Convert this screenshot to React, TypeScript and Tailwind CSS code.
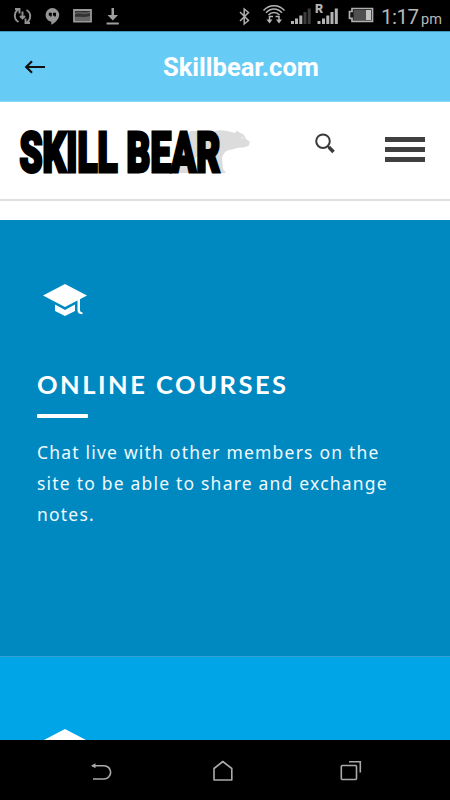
function StatusBar() {
  return (
    <div className="flex h-[31px] w-full shrink-0 bg-black font-['Roboto',sans-serif] text-[#b4b4b4]">
      <svg className="h-[31px] w-[32px]" viewBox="0 0 32 31" fill="none" stroke="#929292" strokeWidth="1.900">
        <path d="M19.500 9A7.200 7.200 0 0 0 18.500 22M25.500 23A7.200 7.200 0 0 0 26.500 10" />
        <path d="M15 9h4.500v4.500M30 23h-4.500v-4.500M22.500 11.500v7M20 16l2.500 2.500 2.500-2.500" />
      </svg>
      <svg className="h-[31px] w-[32px]" viewBox="32 0 32 31">
        <path d="M52.300 8a6.900 6.900 0 0 0-1 13.700v3c4-2 7.500-5.500 7.900-9.500A7 7 0 0 0 52.300 8z" fill="#969696" />
        <path d="M48.800 12.700h3v3l-1.300 1.800v-1.800h-1.700zM53 12.700h3v3l-1.300 1.800v-1.800H53z" fill="#000" />
      </svg>
      <svg className="h-[31px] w-[34px]" viewBox="64 0 34 31">
        <path d="M74 10h17v11.500H74z" fill="#333" stroke="#999" strokeWidth="1.800" />
        <path d="M75 13.500c5-2 7 1 15-1" stroke="#777" fill="none" />
        <path d="M75 17c4-1 7 1 15-1v4.500H75z" fill="#666" />
      </svg>
      <svg className="h-[31px] w-[32px]" viewBox="98 0 32 31" fill="#a0a0a0">
        <path d="M111.500 8h2.500v7h4l-5.200 5.500-5.300-5.500h4zM106.500 22.500h12.300v2h-12.300z" />
      </svg>
      <div className="flex-1" />
      <svg className="h-[31px] w-[24px]" viewBox="232 0 24 31" fill="none" stroke="#b0b0b0" strokeWidth="1.500">
        <path d="M240 12l8.500 8.500-4.300 3.500V9l4.300 3.500-8.500 8.500" />
      </svg>
      <svg className="h-[31px] w-[31px]" viewBox="256 0 31 31" fill="none" stroke="#b4b4b4" strokeWidth="1.500">
        <path d="M263.500 10.500c5.500-6.500 15.500-6.500 21 0M266 12.800c4.500-5 11.500-5 16 0M268.500 15c3-3.300 8-3.300 11 0" />
        <path d="M273 16.500h-3.500v4M275.500 16.500h3.500v4" />
        <path d="M266.500 19.500h6l-3 4zM276 19.500h6l-3 4z" fill="#b4b4b4" stroke="none" />
      </svg>
      <svg className="h-[31px] w-[26px]" viewBox="287 0 26 31">
        <path d="M291 21h3v3h-3zM295 18.500h3V24h-3zM299.300 15.500h3V24h-3z" fill="#b4b4b4" />
        <path d="M303.500 12h3v12h-3zM307.700 8.500h3V24h-3z" fill="#3c3c3c" />
      </svg>
      <svg className="h-[31px] w-[29px]" viewBox="313 0 29 31" fill="#b4b4b4">
        <text x="315" y="13" fontFamily="Roboto" fontSize="12.500" fontWeight="900">R</text>
        <path d="M317.500 21h3v3h-3zM322 18.500h3V24h-3zM326.300 15.500h3V24h-3zM330.500 12h3v12h-3zM334.800 8.500h3V24h-3z" />
      </svg>
      <svg className="h-[31px] w-[38px]" viewBox="342 0 38 31">
        <path d="M352 8.500h20.500v12.800H352v-3h-2.500v-6.800h2.500z" fill="#111" stroke="#b0b0b0" strokeWidth="1.700" />
        <path d="M353.500 10h12.500v10h-12.500z" fill="#505050" />
        <path d="M366 10h5v10h-5z" fill="#c4c4c4" />
      </svg>
      <svg className="h-[31px] w-[70px]" viewBox="380 0 70 31" fill="#b8b8b8" fontFamily="Roboto">
        <text x="381" y="23.500" fontSize="20.500" textLength="38">1:17</text>
        <text x="421" y="23.500" fontSize="14.500" textLength="21">pm</text>
      </svg>
    </div>
  );
}

function AppBar() {
  return (
    <header className="flex h-[71px] w-full shrink-0 items-center border-t border-[#4399bb] border-b border-b-[#8cd9fa] bg-[#66ccf6]">
      <svg className="ml-6 h-5 w-[22px]" viewBox="0 0 22 20" fill="none" stroke="#111" strokeWidth="2.200">
        <path d="M21 10H2M8 4.200L2.200 10 8 15.800" />
      </svg>
      <h1 className="mt-[2px] ml-[117px] font-['Roboto',sans-serif] text-[25.500px] leading-none font-bold text-white">Skillbear.com</h1>
    </header>
  );
}

function Logo() {
  return (
    <svg className="ml-[14px] h-[78px] w-[246px]" viewBox="14 112 246 78">
      <path
        d="M190 131h25c6-2 14 0 20 2l2-2.500 3 2.500c3 0 5 3 6 6l4 3-1.500 4-5.500 1.500c-6 0-10 2-14 2.500-4 1-6 4-7 8l1 11 3 4h-6l-6-13-16-5-8 10 3 8h-15l-1-10z"
        fill="#dcdcdc"
      />
      <circle cx="242.500" cy="138" r=".8" fill="#fff" />
      <g transform="translate(19.5 171.800) scale(.62 1)">
        <text
          textLength="324"
          lengthAdjust="spacingAndGlyphs"
          fontFamily="Roboto, sans-serif"
          fontWeight="900"
          fontSize="56"
          stroke="#000"
          strokeWidth="2.600"
          vectorEffect="non-scaling-stroke"
        >
          SKILL BEAR
        </text>
      </g>
    </svg>
  );
}

function SiteHeader() {
  return (
    <div className="flex h-[99px] w-full shrink-0 items-start border-b-2 border-[#e0e0e0] bg-white pt-[10px]">
      <Logo />
      <svg className="mt-5 ml-[54px] h-6 w-6" viewBox="0 0 24 24" fill="none" stroke="#3a3a3a">
        <circle cx="9" cy="9.200" r="6.800" strokeWidth="2" />
        <path d="M14 14.300l1.500 1.500" strokeWidth="2" />
        <path d="M15 15.300l4.500 4.700" strokeWidth="3.500" />
      </svg>
      <div className="mt-[25px] ml-[47px] flex w-10 flex-col gap-[5px]">
        <div className="h-[5px] bg-[#404040]" />
        <div className="h-[5px] bg-[#404040]" />
        <div className="h-[5px] bg-[#404040]" />
      </div>
    </div>
  );
}

function GradCap() {
  return (
    <svg className="h-8 w-11 shrink-0" viewBox="0 0 44 32" fill="#fff">
      <path d="M22 0l22 11.500L22 23 0 11.500z" />
      <path d="M12 20.500l10 5.500 10-5.500v6.500l-10 5-10-5z" />
      <path d="M34.500 15h2.500v11.500q0 1.500 2.500 2v1.700q-5 0-5-4z" />
    </svg>
  );
}

function NavBar() {
  return (
    <nav className="flex h-[60px] w-full shrink-0 items-center bg-black">
      <svg className="ml-[89px] h-6 w-6" viewBox="89 759 24 24" fill="none" stroke="#aaa" strokeWidth="1.600">
        <path d="M92 766.700h12a6.600 6.600 0 0 1 0 13.300H93" />
        <path d="M91 766.700l4.500-2.500v5z" fill="#aaa" stroke="none" />
      </svg>
      <svg className="ml-[98px] h-6 w-6" viewBox="211 758 24 24" fill="none" stroke="#aaa" strokeWidth="1.600" strokeLinejoin="round">
        <path d="M214 768.500l8.800-7 9 7V780H214z" />
      </svg>
      <svg className="ml-[103px] h-6 w-6" viewBox="338 758.500 24 24" fill="none" stroke="#aaa" strokeWidth="1.600">
        <rect x="341.300" y="766" width="15.200" height="14" rx="1" />
        <path d="M349 762.300h11.300V773" />
      </svg>
    </nav>
  );
}

export default function App() {
  return (
    <div className="flex h-[800px] w-[450px] flex-col overflow-hidden bg-white">
      <StatusBar />
      <AppBar />
      <SiteHeader />
      <main className="mt-[19px] flex h-[520px] w-full flex-col overflow-hidden">
        <section className="flex h-[437px] shrink-0 flex-col items-start border-b border-[#35a2d2] bg-[#0089c1] pt-16 pl-[37px]">
          <div className="pl-[6px]">
            <GradCap />
          </div>
          <h2 className="mt-[53px] font-['Lato',sans-serif] text-[25.500px] leading-[30px] font-bold tracking-[2.500px] whitespace-nowrap text-white">
            ONLINE COURSES
          </h2>
          <div className="mt-[15px] h-1 w-[51px] rounded-[1px] bg-white" />
          <p className="mt-[19px] w-[370px] font-['Noto_Sans',sans-serif] text-[17.500px] leading-[31px] tracking-[1.200px] text-[#f0f9fd]">
            Chat live with other members on the
            <br />
            site to be able to share and exchange
            <br />
            notes.
          </p>
        </section>
        <section className="flex h-[437px] shrink-0 items-start bg-[#00a5e7] pt-[72px] pl-[43px]">
          <GradCap />
        </section>
      </main>
      <NavBar />
    </div>
  );
}
